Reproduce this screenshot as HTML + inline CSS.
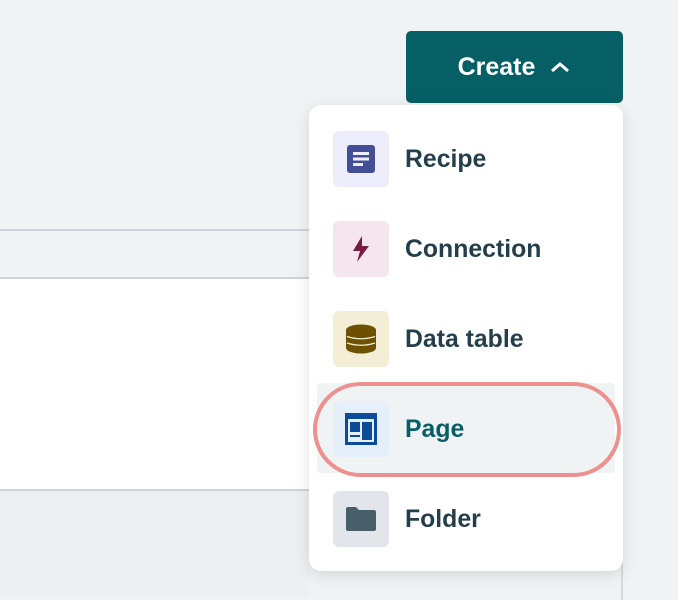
<!DOCTYPE html>
<html><head><style>
*{margin:0;padding:0;box-sizing:border-box}
body{width:678px;height:598px;background:#f0f3f4;position:relative;overflow:hidden;font-family:"Liberation Sans",sans-serif}
.l1{position:absolute;left:0;top:229px;width:310px;height:2px;background:#cdd3d9}
.panel{position:absolute;left:0;top:277px;width:310px;height:214px;background:#fff;border-top:2px solid #cdd3d9;border-bottom:2px solid #cdd3d9}
.below{position:absolute;left:0;top:491px;width:310px;height:107px;background:#eeeff3}
.vline{position:absolute;left:621px;top:560px;width:2px;height:40px;background:#d6dade}
.btn{position:absolute;left:406px;top:31px;width:217px;height:72px;background:#075f66;border-radius:5px;color:#fff;font-weight:bold;font-size:25px;display:flex;align-items:center;justify-content:center;gap:14px}
.menu{position:absolute;left:309px;top:105px;width:314px;height:466px;background:#fff;border-radius:12px;box-shadow:0 4px 16px rgba(0,0,0,.12)}
.item{position:absolute;left:24px;width:280px;height:56px;display:flex;align-items:center}
.ic{width:56px;height:56px;border-radius:6px;display:flex;align-items:center;justify-content:center;margin-right:16px}
.tx{font-size:24.8px;font-weight:bold;color:#243f4b;position:relative;top:1px}
.hl{position:absolute;left:8px;top:278px;width:298px;height:90px;background:#f0f3f4;border-radius:4px}
.ring{position:absolute;left:4px;top:277px;width:308px;height:95px;border:4px solid #ee9090;border-radius:50px}
</style></head><body>
<div class="l1"></div>
<div class="panel"></div>
<div class="below"></div>
<div class="vline"></div>
<div class="btn"><span>Create</span><svg width="22" height="14" viewBox="0 0 22 14"><path d="M3 11 L11 4 L19 11" stroke="#fff" stroke-width="3" fill="none"/></svg></div>
<div class="menu">
<div class="hl"></div>
<div class="item" style="top:26px"><div class="ic" style="background:#eeedfc"><svg width="28" height="28" viewBox="0 0 28 28"><rect width="28" height="28" rx="3" fill="#434f94"/><rect x="6" y="7" width="16" height="3" fill="#eeedfc"/><rect x="6" y="12.5" width="16" height="3" fill="#eeedfc"/><rect x="6" y="18" width="10" height="3" fill="#eeedfc"/></svg></div><span class="tx">Recipe</span></div>
<div class="item" style="top:116px"><div class="ic" style="background:#f5e5ec"><svg width="20" height="26" viewBox="0 0 20 26"><path d="M11 0 L2 15 L9 15 L6 26 L18 10 L11 10 Z" fill="#761d46"/></svg></div><span class="tx">Connection</span></div>
<div class="item" style="top:206px"><div class="ic" style="background:#f3eed5"><svg width="32" height="30" viewBox="0 0 32 30"><ellipse cx="16" cy="6" rx="15" ry="5.5" fill="#6d5100"/><rect x="1" y="6" width="30" height="18" fill="#6d5100"/><ellipse cx="16" cy="24" rx="15" ry="5.5" fill="#6d5100"/><path d="M2 12.5 Q16 17 30 12.5 M2 19 Q16 23.5 30 19" stroke="#f3eed5" stroke-width="1.3" fill="none"/></svg></div><span class="tx">Data table</span></div>
<div class="item" style="top:296px"><div class="ic" style="background:#e5eff9"><svg width="32" height="32" viewBox="0 0 32 32"><rect width="32" height="32" fill="#0c4a9a"/><rect x="3" y="6" width="26" height="23" fill="#e5eff9"/><rect x="5" y="9" width="10" height="10" fill="#0c4a9a"/><rect x="17" y="9" width="10" height="18" fill="#0c4a9a"/><rect x="5" y="22" width="10" height="2" fill="#0c4a9a"/></svg></div><span class="tx" style="color:#075f66">Page</span></div>
<div class="item" style="top:386px"><div class="ic" style="background:#e2e6ea"><svg width="30" height="24" viewBox="0 0 30 24"><path d="M0 2 Q0 0 2 0 L10 0 L13 3 L28 3 Q30 3 30 5 L30 22 Q30 24 28 24 L2 24 Q0 24 0 22 Z" fill="#485f6a"/></svg></div><span class="tx">Folder</span></div>
<div class="ring"></div>
</div>
</body></html>
